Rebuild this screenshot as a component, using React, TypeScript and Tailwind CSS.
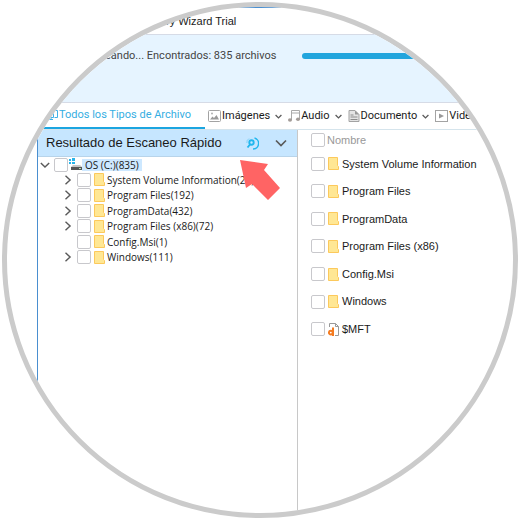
import { useState } from 'react'

interface TreeNode {
  id: string
  name: string
  count: number
  expandable: boolean
}

const treeNodes: TreeNode[] = [
  { id: 'svi', name: 'System Volume Information', count: 26, expandable: true },
  { id: 'pf', name: 'Program Files', count: 192, expandable: true },
  { id: 'pd', name: 'ProgramData', count: 432, expandable: true },
  { id: 'pf86', name: 'Program Files (x86)', count: 72, expandable: true },
  { id: 'msi', name: 'Config.Msi', count: 1, expandable: false },
  { id: 'win', name: 'Windows', count: 111, expandable: true },
]

const files = [
  { name: 'System Volume Information', type: 'folder' },
  { name: 'Program Files', type: 'folder' },
  { name: 'ProgramData', type: 'folder' },
  { name: 'Program Files (x86)', type: 'folder' },
  { name: 'Config.Msi', type: 'folder' },
  { name: 'Windows', type: 'folder' },
  { name: '$MFT', type: 'file' },
]

const tabs = [
  { label: 'Imágenes', Icon: ImageIcon },
  { label: 'Audio', Icon: MusicIcon },
  { label: 'Documento', Icon: DocumentIcon },
  { label: 'Video', Icon: VideoIcon },
]

function MonitorIcon() {
  return (
    <svg width="12" height="12" viewBox="0 0 12 12" fill="none" stroke="#3fb0e8" className="shrink-0">
      <path d="M3.5 1.5h7v7h-3M1.5 3.5v5h5v-5M4 8.5v2M2 10.5h4" />
    </svg>
  )
}

function ImageIcon() {
  return (
    <svg width="13" height="12" viewBox="0 0 13 12" fill="none" className="shrink-0">
      <rect x="0.5" y="0.5" width="12" height="11" rx="1" stroke="#a3a3a3" />
      <path d="M2 9.5 4.5 6.5 6 8 8.5 5 11 9.5Z" fill="#9a9a9a" />
      <circle cx="4" cy="3.5" r="1" fill="#b0b0b0" />
    </svg>
  )
}

function MusicIcon() {
  return (
    <svg width="12" height="12" viewBox="0 0 12 12" fill="none" className="shrink-0">
      <path d="M3.5 10V.5h8v9M3.5 3h8" stroke="#aaa" />
      <ellipse cx="2" cy="10" rx="2" ry="1.7" fill="#a39c98" />
      <ellipse cx="10" cy="9.3" rx="2" ry="1.7" fill="#a39c98" />
    </svg>
  )
}

function DocumentIcon() {
  return (
    <svg width="12" height="12" viewBox="0 0 12 12" fill="none" className="shrink-0">
      <path d="M1 .5h6L11 4.5v7H1Z" fill="#e4e4e4" stroke="#a3a3a3" />
      <path d="M7 .5v4h4Z" fill="#999" />
      <path d="M2.5 5h3M2.5 7h7M2.5 9.5h7" stroke="#8c8c8c" />
    </svg>
  )
}

function VideoIcon() {
  return (
    <svg width="13" height="12" viewBox="0 0 13 12" fill="none" className="shrink-0">
      <rect x="0.5" y="0.5" width="12" height="11" stroke="#a3a3a3" />
      <path d="M4 3.5 9 6 4 8.5Z" fill="#999" />
    </svg>
  )
}

function Chevron({ direction, size }: { direction: 'down' | 'right'; size: number }) {
  return (
    <svg width={size} height={size} viewBox="0 0 12 12" fill="none" stroke="#5a5a5a" strokeWidth={size < 10 ? 2.2 : 1.7}>
      <path d={direction === 'down' ? 'M1 3.5 6 8.5 11 3.5' : 'M3 1 8.5 6 3 11'} />
    </svg>
  )
}

function FolderIcon() {
  return (
    <svg width="11" height="13" viewBox="0 0 11 13" className="shrink-0">
      <path d="M.5 .5h9v8l1 1v3H.5Z" fill="#ffe794" stroke="#fcc95c" />
    </svg>
  )
}

function MftIcon() {
  return (
    <svg width="11" height="13" viewBox="0 0 11 13" fill="none" className="shrink-0">
      <path d="M1.5 4V.5h6l3 3v9H7" fill="#fff" stroke="#999" />
      <path d="M7.5 .5v3h3" stroke="#999" />
      <circle cx="2.8" cy="9.6" r="1.9" stroke="#f47b20" strokeWidth="1.9" />
      <path d="M5 4.5V13" stroke="#f47b20" strokeWidth="2" />
    </svg>
  )
}

function DriveIcon() {
  return (
    <svg width="13" height="13" viewBox="0 0 13 13" className="shrink-0">
      <path d="M0 1h2v2H0zM3 0h3v3H3zM0 4h2v2H0zM3 4h3v2H3z" fill="#28b4ea" />
      <path d="M4 7h7l2 2H2Z" fill="#c4c4c4" />
      <path d="M2 9h11v3H2Z" fill="#555" />
      <path d="M10 10h2v1h-2Z" fill="#b8e0b8" />
    </svg>
  )
}

function ScanIcon() {
  return (
    <svg width="13" height="13" viewBox="0 0 13 13" fill="none" stroke="#20b7ee" className="shrink-0">
      <circle cx="5.5" cy="5.5" r="2.2" strokeWidth="1.9" />
      <path d="M4 7.5 1.5 10.5" strokeWidth="1.9" />
      <path d="M8.5 1A5.6 5.6 0 0 1 7 12" strokeWidth="1.5" />
      <path d="M.8 6A5 5 0 0 1 3 1.5" strokeWidth="1" opacity="0.4" />
    </svg>
  )
}

function Checkbox({ id }: { id: string }) {
  return (
    <input
      id={id}
      type="checkbox"
      className="h-3.5 w-3.5 shrink-0 appearance-none rounded-xs border border-[#c8c8cc] bg-white checked:bg-sky-400"
    />
  )
}

export default function App() {
  const [open, setOpen] = useState(true)

  return (
    <div className="bg-white p-0.5 font-['Liberation_Sans',Arial,sans-serif] text-[11px] text-[#1a1a1a]">
      <div className="aspect-square w-full overflow-hidden rounded-full border-5 border-[#cbcbcb]">
        <div className="ml-[30px] flex h-full flex-col border-t border-l border-[#4a8fd0]">
          <header className="flex h-[26px] shrink-0 items-center pl-[128px]">
            <h1>ry Wizard Trial</h1>
          </header>

          {/* Scan status */}
          <section className="flex h-[69px] shrink-0 items-start gap-[26px] border-y border-[#d6dbe6] bg-[#e6f4ff] pt-[13px] pl-[67px] text-[#444]">
            <p className="font-[Roboto,sans-serif] leading-4">eando... Encontrados: 835 archivos</p>
            <div className="flex h-4 flex-1 items-center" role="progressbar" aria-label="Escaneando">
              <div className="h-1.5 w-full rounded-full bg-[#22a5dd]" />
            </div>
          </section>

          {/* File types */}
          <nav className="flex h-[27px] shrink-0 border-b border-[#d5e4ec] font-[Roboto,sans-serif]">
            <button className="flex w-[167px] shrink-0 items-center border-b-2 border-[#1ba5e0] pl-[9px] text-[#35aee2]">
              <MonitorIcon />
              <span>Todos los Tipos de Archivo</span>
            </button>
            <div className="flex items-center gap-1.5 pl-[3px]">
              {tabs.map(({ label, Icon }) => (
                <button key={label} className="flex items-center gap-px">
                  <Icon />
                  <span>{label}</span>
                  <span className="ml-1">
                    <Chevron direction="down" size={7} />
                  </span>
                </button>
              ))}
            </div>
          </nav>

          <main className="flex min-h-0 flex-1">
            <aside className="relative w-[260px] shrink-0 border-r border-[#c8c8c8]">
              <div className="flex h-[27px] items-center border-b border-[#b8d4ea] bg-[#c6e6ff] pr-2.5 pl-2">
                <h2 className="flex-1 text-[13px]">Resultado de Escaneo Rápido</h2>
                <button aria-label="Escanear">
                  <ScanIcon />
                </button>
                <button className="ml-4" aria-label="Mostrar opciones">
                  <Chevron direction="down" size={12} />
                </button>
              </div>

              <div className="font-['Open_Sans',sans-serif] text-[10px] leading-3 font-medium">
                <div className="flex h-[15px] items-center gap-1 pl-0.5">
                  <button onClick={() => setOpen(!open)} aria-label="OS (C:)">
                    <Chevron direction="down" size={10} />
                  </button>
                  <div className="flex items-center gap-px">
                    <Checkbox id="os" />
                    <label htmlFor="os" className="flex items-center">
                      <DriveIcon />
                      <span className="bg-[#cde8ff] px-[3px]">OS (C:)(835)</span>
                    </label>
                  </div>
                </div>
                {open && (
                  <ul className="flex h-[93px] flex-col">
                    {treeNodes.map(node => (
                      <li key={node.id} className="flex flex-1 items-center gap-1 pl-[25px]">
                        <button className={node.expandable ? '' : 'invisible'} aria-label={node.name}>
                          <Chevron direction="right" size={10} />
                        </button>
                        <div className="flex items-center gap-[3px]">
                          <Checkbox id={node.id} />
                          <label htmlFor={node.id} className="flex items-center gap-0.5">
                            <FolderIcon />
                            <span className="whitespace-nowrap">{node.name}({node.count})</span>
                          </label>
                        </div>
                      </li>
                    ))}
                  </ul>
                )}
              </div>

              <svg width="42" height="42" viewBox="0 0 42 42" className="absolute top-[30px] left-[202px]">
                <path d="M0 0 28 4 24 10 40 28 28 40 12 24 6 28Z" fill="#ff6464" />
              </svg>
            </aside>

            <div className="flex-1 pl-[13px]">
              <table className="w-full">
                <thead>
                  <tr className="h-5">
                    <th className="p-0 text-left font-normal text-[#999]">
                      <div className="flex items-center gap-0.5">
                        <Checkbox id="all" />
                        <label htmlFor="all">Nombre</label>
                      </div>
                    </th>
                  </tr>
                </thead>
              </table>
              <table className="h-[193px] w-full">
                <tbody>
                  {files.map(file => (
                    <tr key={file.name}>
                      <td className="p-0">
                        <div className="flex items-center gap-[3px]">
                          <Checkbox id={'file-' + file.name} />
                          <label htmlFor={'file-' + file.name} className="flex items-center gap-[3px]">
                            {file.type === 'folder' ? <FolderIcon /> : <MftIcon />}
                            {file.name}
                          </label>
                        </div>
                      </td>
                    </tr>
                  ))}
                </tbody>
              </table>
            </div>
          </main>
        </div>
      </div>
    </div>
  )
}
